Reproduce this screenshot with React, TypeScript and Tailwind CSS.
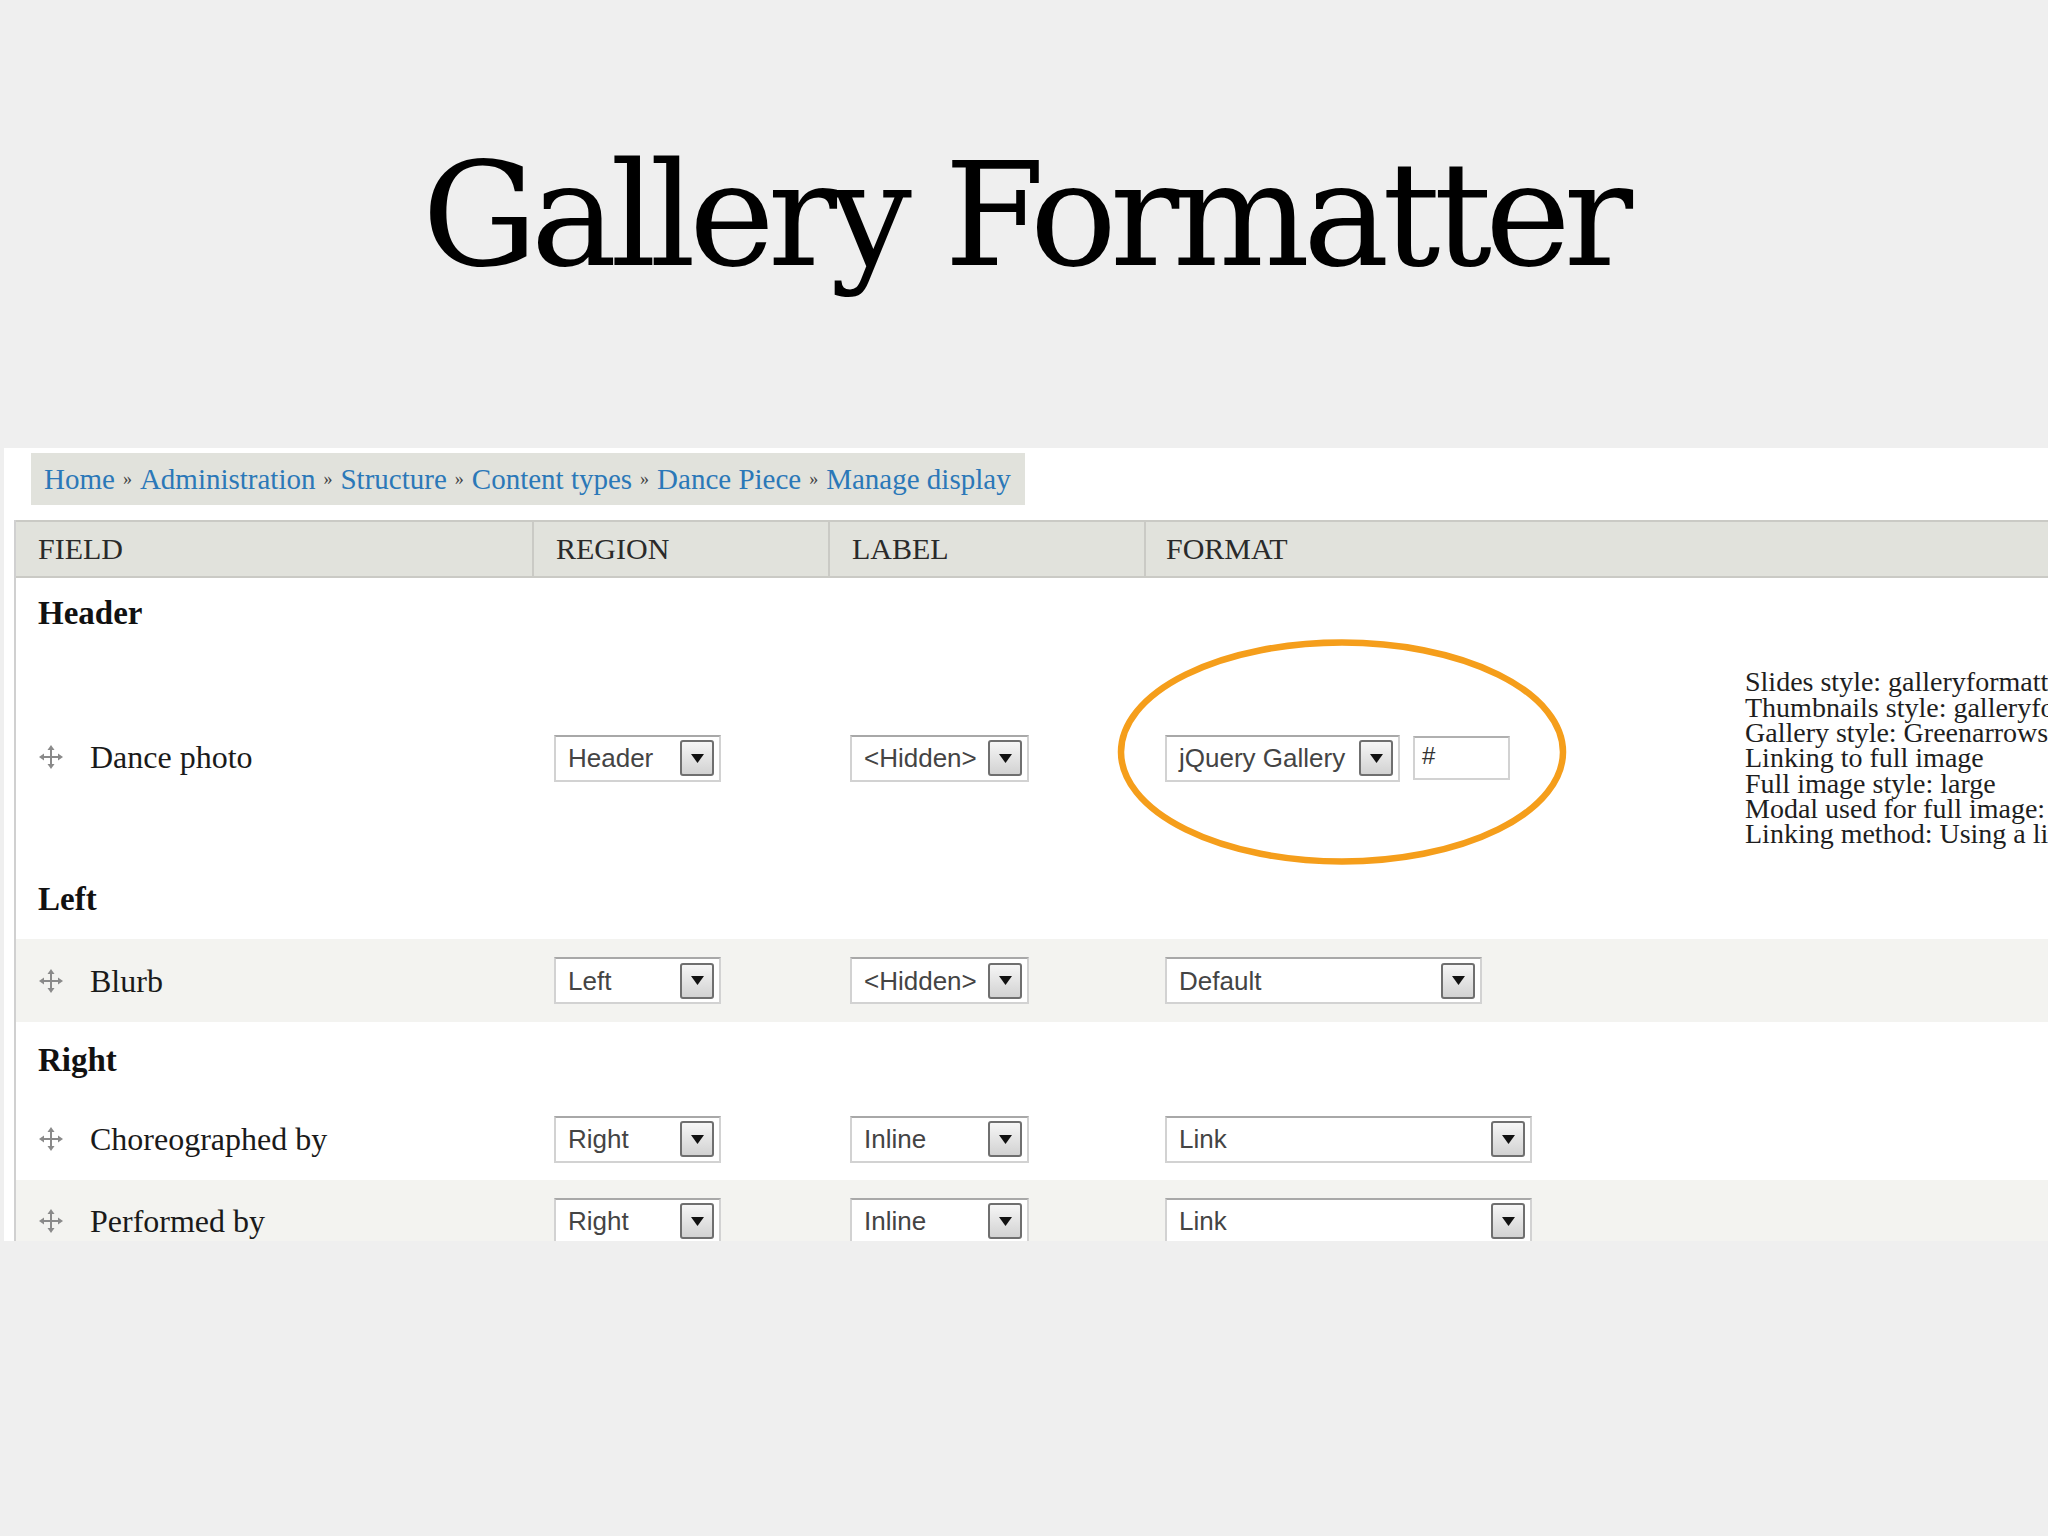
import React from "react";

const serif = "font-['Liberation_Serif','Times_New_Roman',serif]";

function MoveIcon() {
  return (
    <svg width="26" height="26" viewBox="0 0 26 26" aria-hidden>
      <g fill="#8a8a8a" stroke="#8a8a8a">
        <line x1="13" y1="4" x2="13" y2="22" strokeWidth="2" />
        <line x1="4" y1="13" x2="22" y2="13" strokeWidth="2" />
        <polygon points="13,1 9.5,6 16.5,6" stroke="none" />
        <polygon points="13,25 9.5,20 16.5,20" stroke="none" />
        <polygon points="1,13 6,9.5 6,16.5" stroke="none" />
        <polygon points="25,13 20,9.5 20,16.5" stroke="none" />
      </g>
    </svg>
  );
}

function ArrowButton() {
  return (
    <span className="flex h-[36px] w-[34px] shrink-0 items-center justify-center rounded-[3px] border-2 border-[#6f6f6f] bg-gradient-to-b from-[#f6f6f6] to-[#d2d2d2]">
      <svg width="13" height="9" viewBox="0 0 13 9" aria-hidden>
        <polygon points="0,0 13,0 6.5,9" fill="#111" />
      </svg>
    </span>
  );
}

function Select(props: { value: string; width: string }) {
  return (
    <div
      className={[
        "flex h-[47px] items-center justify-between border-2 border-[#d2d2d2] border-t-[#a8a8a8] bg-white pl-[12px] pr-[5px]",
        props.width,
      ].join(" ")}
    >
      <span className="font-['Liberation_Sans',Arial,sans-serif] text-[26px] leading-none text-[#444]">
        {props.value}
      </span>
      <ArrowButton />
    </div>
  );
}

type Field = {
  name: string;
  region: string;
  label: string;
  format: string;
  formatWidth: string;
  striped: boolean;
};

const CRUMBS = ["Home", "Administration", "Structure", "Content types", "Dance Piece", "Manage display"];

const SUMMARY = [
  "Slides style: galleryformatter_slide",
  "Thumbnails style: galleryformatter_thumb",
  "Gallery style: Greenarrows",
  "Linking to full image",
  "Full image style: large",
  "Modal used for full image: colorbox",
  "Linking method: Using a link to the full image",
];

function FieldCell(props: { name: string }) {
  return (
    <div className="flex items-center pl-[22px]">
      <MoveIcon />
      <span className={`ml-[26px] text-[32px] leading-none text-[#1a1a1a] ${serif}`}>{props.name}</span>
    </div>
  );
}

function FieldRow(props: { field: Field; height: string }) {
  const f = props.field;
  return (
    <tr className={f.striped ? "bg-[#f3f3f0]" : "bg-white"}>
      <td className={`${props.height} p-0 align-middle`}>
        <FieldCell name={f.name} />
      </td>
      <td className="p-0 pl-[21px] align-middle">
        <Select value={f.region} width="w-[167px]" />
      </td>
      <td className="p-0 pl-[21px] align-middle">
        <Select value={f.label} width="w-[179px]" />
      </td>
      <td className="p-0 pl-[20px] align-middle">
        <Select value={f.format} width={f.formatWidth} />
      </td>
      <td className="p-0" />
    </tr>
  );
}

function RegionRow(props: { title: string; height: string }) {
  return (
    <tr className="bg-white">
      <td colSpan={5} className={`${props.height} p-0 pl-[22px] align-middle`}>
        <span className={`text-[33px] font-bold leading-none text-[#111] ${serif}`}>{props.title}</span>
      </td>
    </tr>
  );
}

export default function App() {
  return (
    <div className="min-h-[1536px] w-full overflow-hidden bg-[#efefef]">
      <h1 className="mt-[142px] h-[145px] text-center font-['DejaVu_Serif',serif] text-[145px] font-normal leading-none tracking-[-7px] text-black">
        Gallery Formatter
      </h1>

      <div className="relative ml-[4px] mt-[161px] h-[793px] overflow-hidden bg-white">
        <div className={`ml-[27px] mt-[5px] flex h-[52px] w-[994px] items-center bg-[#e1e2dc] pl-[13px] ${serif}`}>
          {CRUMBS.map((c, i) => (
            <React.Fragment key={c}>
              {i > 0 && <span className="mx-[8px] text-[18px] text-[#444]">»</span>}
              <span className="whitespace-nowrap text-[29px] leading-none text-[#2b78b8]">{c}</span>
            </React.Fragment>
          ))}
        </div>

        <div className="ml-[10px] mt-[15px] w-[2310px] border-l-2 border-[#d0d0d0]">
          <table className="w-[2308px] table-fixed border-collapse">
            <colgroup>
              <col className="w-[517px]" />
              <col className="w-[296px]" />
              <col className="w-[316px]" />
              <col className="w-[578px]" />
              <col className="w-[601px]" />
            </colgroup>
            <thead>
              <tr className="bg-[#e1e2dc]">
                {["FIELD", "REGION", "LABEL"].map((h) => (
                  <th
                    key={h}
                    className={`h-[56px] border-y-2 border-r-2 border-[#cacac5] p-0 pl-[22px] text-left align-middle text-[30px] font-normal leading-none text-[#2a2a2a] ${serif}`}
                  >
                    {h}
                  </th>
                ))}
                <th
                  colSpan={2}
                  className={`h-[56px] border-y-2 border-[#cacac5] p-0 pl-[20px] text-left align-middle text-[30px] font-normal leading-none text-[#2a2a2a] ${serif}`}
                >
                  FORMAT
                </th>
              </tr>
            </thead>
            <tbody>
              <RegionRow title="Header" height="h-[72px]" />
              <tr className="bg-white">
                <td className="h-[210px] p-0 pt-[6px] align-middle">
                  <FieldCell name="Dance photo" />
                </td>
                <td className="p-0 pl-[21px] pt-[8px] align-middle">
                  <Select value="Header" width="w-[167px]" />
                </td>
                <td className="p-0 pl-[21px] pt-[8px] align-middle">
                  <Select value="<Hidden>" width="w-[179px]" />
                </td>
                <td className="p-0 pl-[20px] pt-[8px] align-middle">
                  <div className="flex items-center gap-[13px]">
                    <Select value="jQuery Gallery" width="w-[235px]" />
                    <div className="flex h-[44px] w-[97px] items-start border-2 border-[#d2d2d2] border-t-[#b0b0b0] bg-white pl-[7px] pt-[6px] font-['Liberation_Sans',Arial,sans-serif] text-[24px] leading-none text-[#333]">
                      #
                    </div>
                  </div>
                </td>
                <td className="p-0 pl-[22px] pt-[8px] align-middle">
                  <div className={`text-[28px] leading-[25.3px] text-[#1e1e1e] ${serif}`}>
                    {SUMMARY.map((s) => (
                      <div key={s} className="whitespace-nowrap">
                        {s}
                      </div>
                    ))}
                  </div>
                </td>
              </tr>
              <RegionRow title="Left" height="h-[80px]" />
              <FieldRow
                height="h-[83px]"
                field={{ name: "Blurb", region: "Left", label: "<Hidden>", format: "Default", formatWidth: "w-[317px]", striped: true }}
              />
              <RegionRow title="Right" height="h-[76px]" />
              <FieldRow
                height="h-[82px]"
                field={{ name: "Choreographed by", region: "Right", label: "Inline", format: "Link", formatWidth: "w-[367px]", striped: false }}
              />
              <FieldRow
                height="h-[82px]"
                field={{ name: "Performed by", region: "Right", label: "Inline", format: "Link", formatWidth: "w-[367px]", striped: true }}
              />
            </tbody>
          </table>
        </div>

        <svg
          className="pointer-events-none absolute left-[1113px] top-[191px]"
          width="450"
          height="226"
          viewBox="0 0 450 226"
          aria-hidden
        >
          <ellipse cx="225" cy="113" rx="221" ry="109.5" fill="none" stroke="#f59e1b" strokeWidth="6.5" />
        </svg>
      </div>
    </div>
  );
}
